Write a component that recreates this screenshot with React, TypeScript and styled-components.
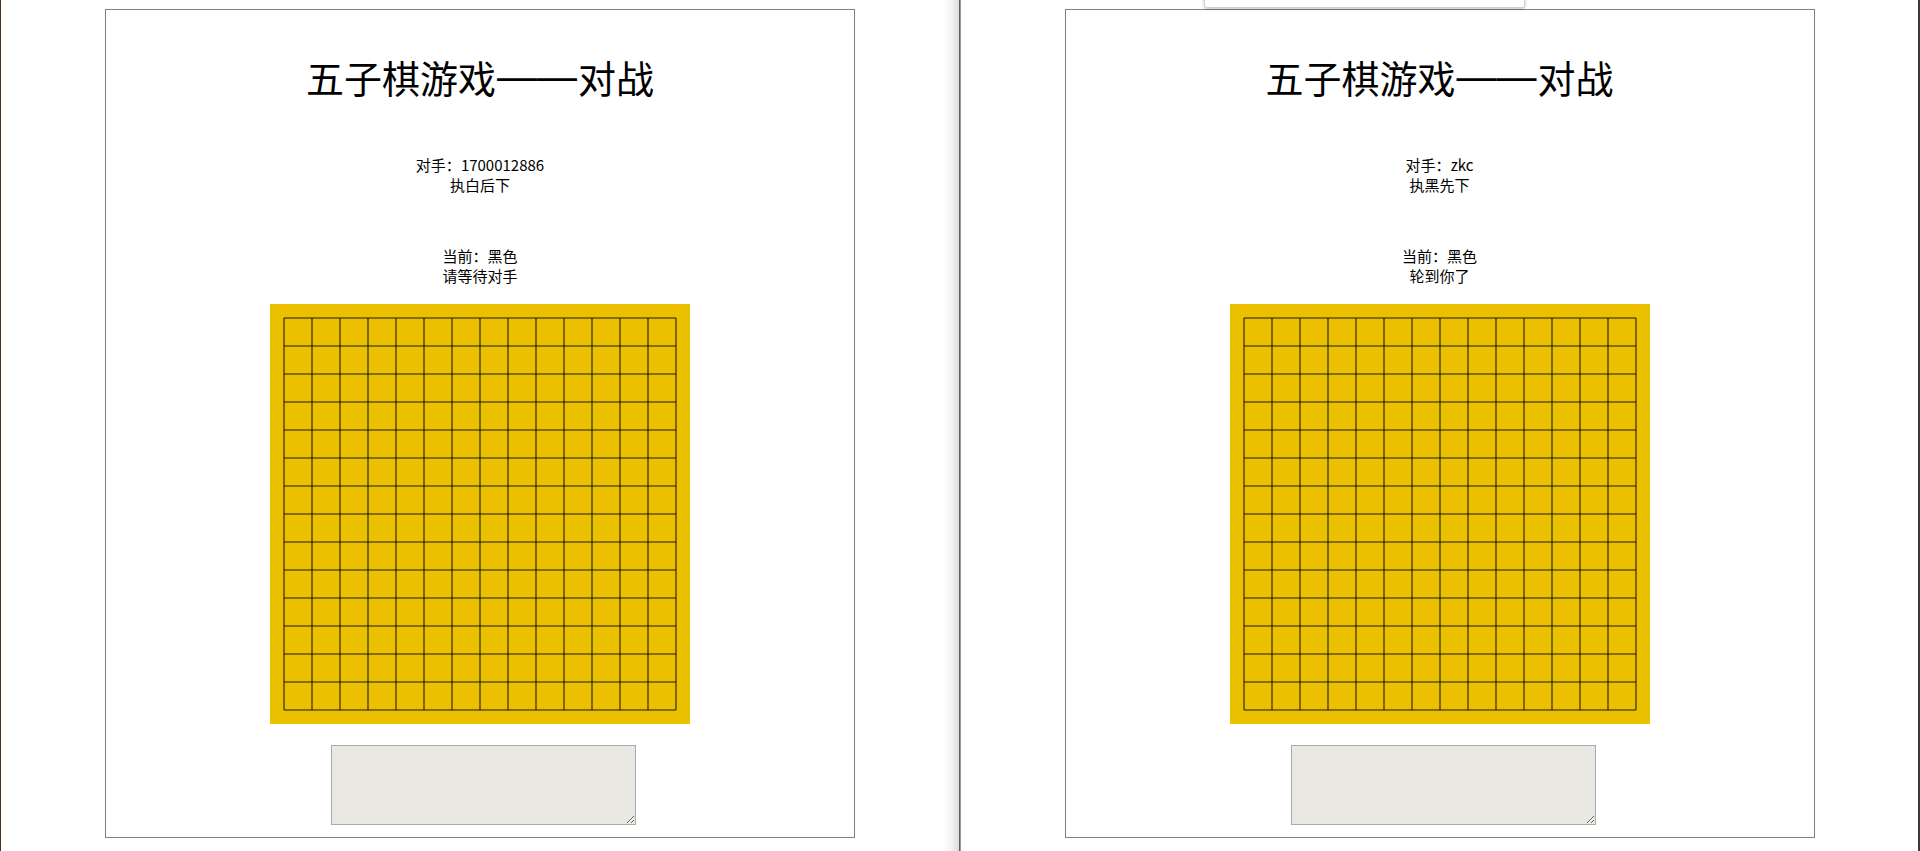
import React from "react";
import styled, { createGlobalStyle } from "styled-components";

const Global = createGlobalStyle`
  html, body { margin: 0; padding: 0; background: #ffffff; }
  body { font-family: "Noto Sans CJK SC", "Noto Sans", sans-serif; color: #000; }
  * { box-sizing: border-box; }
`;

const Desktop = styled.div`
  position: relative;
  display: flex;
  width: 1920px;
  height: 851px;
  overflow: hidden;
  background: #ffffff;
`;

const EdgeLine = styled.div<{ $color: string; $w: number }>`
  flex: 0 0 ${(p) => p.$w}px;
  background: ${(p) => p.$color};
`;

const Window = styled.div<{ $w: number; $shadow?: boolean }>`
  position: relative;
  flex: 0 0 ${(p) => p.$w}px;
  display: flex;
  justify-content: center;
  align-items: flex-start;
  padding-top: 9px;
  background: ${(p) =>
    p.$shadow
      ? "linear-gradient(to right, #ffffff calc(100% - 16px), #f4f4f4 calc(100% - 8px), #dcdcdc 100%)"
      : "#ffffff"};
`;

const Divider = styled.div`
  flex: 0 0 2px;
  background: linear-gradient(to right, #5e5e5e 0 1px, #9a9a9a 1px 2px);
`;

const Card = styled.div`
  width: 750px;
  height: 829px;
  border: 1px solid #808080;
  display: flex;
  flex-direction: column;
  align-items: center;
`;

const Title = styled.h1`
  margin: 41px 0 0;
  font-size: 38px;
  font-weight: 400;
  line-height: 50px;
  letter-spacing: 0;
  white-space: nowrap;
`;

const Dash = styled.span`
  font-family: "Liberation Sans", sans-serif;
  font-size: 40px;
  vertical-align: 3px;
  margin: 0 1px;
`;

const InfoBlock = styled.div<{ $mt: number }>`
  margin-top: ${(p) => p.$mt}px;
  font-size: 15px;
  line-height: 20px;
  text-align: center;
`;

const Line = styled.div``;

const Board = styled.div`
  margin-top: 18px;
  width: 420px;
  height: 420px;
  padding: 14px;
  background: #ebc000;
`;

const Memo = styled.textarea`
  margin: 21px 0 0 7px;
  width: 305px;
  height: 80px;
  border: 1px solid #a9a9a9;
  background: #e9e8e2;
  resize: both;
  font-family: inherit;
`;

const Popup = styled.div`
  position: absolute;
  left: 1204px;
  top: -6px;
  width: 321px;
  height: 14px;
  background: #ffffff;
  border: 1px solid #cfcfcf;
  border-radius: 3px;
  box-shadow: 0 1px 3px rgba(0, 0, 0, 0.25);
`;

const Grid: React.FC = () => {
  const n = 15;
  const step = 28;
  const lines = [];
  for (let i = 0; i < n; i++) {
    const p = i * step + 1;
    lines.push(<line key={"h" + i} x1={1} y1={p} x2={393} y2={p} />);
    lines.push(<line key={"v" + i} x1={p} y1={1} x2={p} y2={393} />);
  }
  return (
    <svg width={394} height={394} style={{ display: "block", margin: "-1px" }}>
      <g stroke="#000" strokeOpacity={0.58} strokeWidth={1.6}>
        {lines}
      </g>
    </svg>
  );
};

type GameProps = {
  opponent: string;
  side: string;
  current: string;
  status: string;
};

const GamePanel: React.FC<GameProps> = ({ opponent, side, current, status }) => (
  <Card>
    <Title>
      五子棋游戏<Dash>——</Dash>对战
    </Title>
    <InfoBlock $mt={53}>
      <Line>对手：{opponent}</Line>
      <Line>{side}</Line>
    </InfoBlock>
    <InfoBlock $mt={51}>
      <Line>当前：{current}</Line>
      <Line>{status}</Line>
    </InfoBlock>
    <Board>
      <Grid />
    </Board>
    <Memo readOnly />
  </Card>
);

export default function App() {
  return (
    <>
      <Global />
      <Desktop>
        <EdgeLine $color="#4a3620" $w={1} />
        <Window $w={958} $shadow>
          <GamePanel opponent="1700012886" side="执白后下" current="黑色" status="请等待对手" />
        </Window>
        <Divider />
        <Window $w={957}>
          <GamePanel opponent="zkc" side="执黑先下" current="黑色" status="轮到你了" />
        </Window>
        <EdgeLine $color="#3a3a3a" $w={2} />
        <Popup />
      </Desktop>
    </>
  );
}
